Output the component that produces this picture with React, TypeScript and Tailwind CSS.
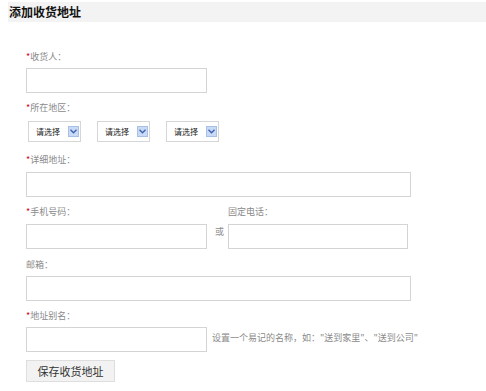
import React from "react";

const Label = ({ text, required = false, className = "" }: { text: string; required?: boolean; className?: string }) => (
  <div className={"h-[14px] whitespace-nowrap text-[9px] leading-[14px] text-[#8a8a8a] " + className}>
    {required && <span className="text-[#d0021b]">*</span>}
    {text}
  </div>
);

const Select = () => (
  <div className="flex h-[21px] w-[53px] shrink-0 items-center justify-between border border-[#d6d6d6] bg-white pl-[7px] pr-[1px]">
    <span className="whitespace-nowrap text-[8px] leading-none text-[#222]">请选择</span>
    <span className="flex h-[11px] w-[11px] items-center justify-center border border-[#a9c0e6] bg-[#c9daf6]">
      <svg width="7" height="5" viewBox="0 0 7 5">
        <path d="M0.5 0.8 L3.5 3.8 L6.5 0.8" fill="none" stroke="#3f63b0" strokeWidth="1.4" />
      </svg>
    </span>
  </div>
);

const App = () => {
  return (
    <div className="h-[391px] w-[486px] overflow-hidden bg-white font-['Noto_Sans_CJK_SC',sans-serif]">
      <div className="ml-[8px] mt-[2px] h-[20px] bg-[#f3f3f3] pl-[1px] text-[12px] font-bold leading-[20px] text-[#111]">
        添加收货地址
      </div>

      <div className="flex flex-col pl-[26px] pt-[28px]">
        <Label text="收货人：" required />
        <div className="mt-[4px] h-[25px] w-[181px] border border-[#d4d4d4]" />

        <Label text="所在地区：" required className="mt-[8px]" />
        <div className="mt-[6px] flex gap-[16px] pl-[2px]">
          <Select />
          <Select />
          <Select />
        </div>

        <Label text="详细地址：" required className="mt-[11px]" />
        <div className="mt-[5px] h-[25px] w-[385px] border border-[#d4d4d4]" />

        <div className="mt-[8px] flex">
          <Label text="手机号码：" required className="w-[202px]" />
          <Label text="固定电话：" />
        </div>
        <div className="mt-[5px] flex items-start">
          <div className="h-[25px] w-[181px] border border-[#d4d4d4]" />
          <span className="ml-[8px] mt-[2px] w-[13px] text-[9px] leading-[12px] text-[#8a8a8a]">或</span>
          <div className="h-[25px] w-[180px] border border-[#d4d4d4]" />
        </div>

        <Label text="邮箱：" className="mt-[9px]" />
        <div className="mt-[4px] h-[25px] w-[385px] border border-[#d4d4d4]" />

        <Label text="地址别名：" required className="mt-[8px]" />
        <div className="mt-[4px] flex items-center">
          <div className="h-[25px] w-[181px] border border-[#d4d4d4]" />
          <span className="ml-[5px] -mt-[4px] whitespace-nowrap text-[9px] leading-[12px] text-[#8a8a8a]">
            设置一个易记的名称，如："送到家里"、"送到公司"
          </span>
        </div>

        <button className="mt-[8px] h-[22px] w-[89px] border border-[#dedede] bg-[#f2f2f2] text-[11px] leading-none text-[#333]">
          保存收货地址
        </button>
      </div>
    </div>
  );
};

export default App;
